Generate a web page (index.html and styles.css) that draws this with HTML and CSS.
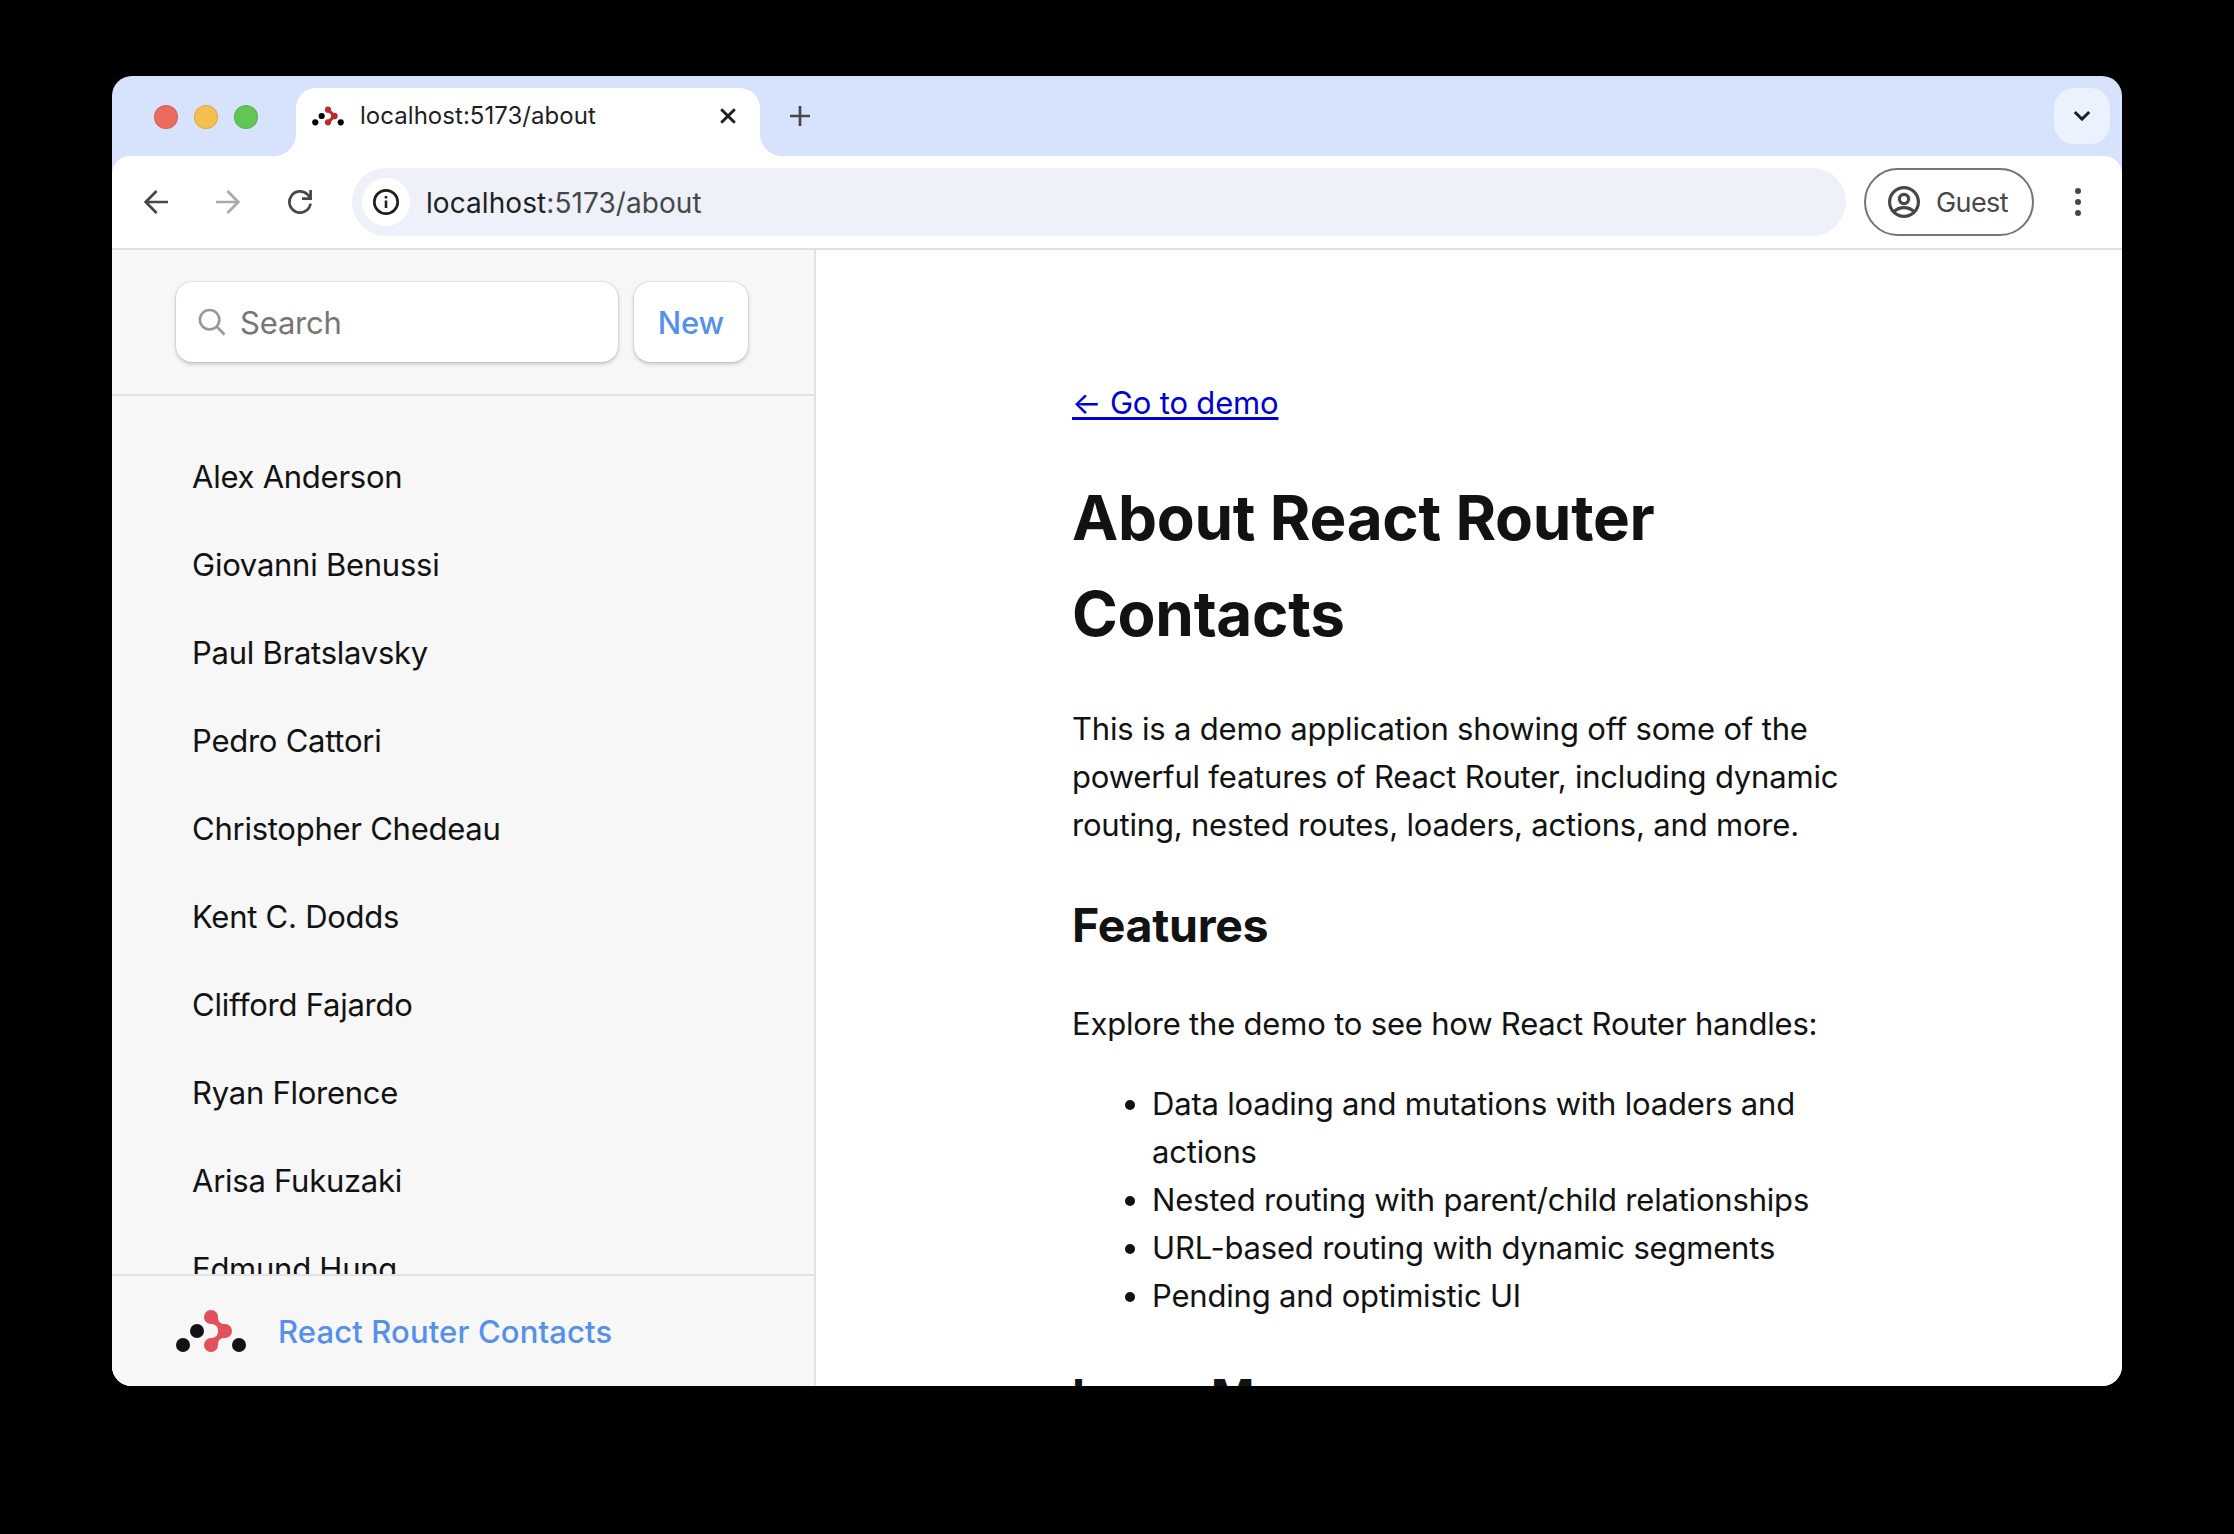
FILE: index.html
```html
<!DOCTYPE html>
<html lang="en">
<head>
<meta charset="utf-8">
<title>React Router Contacts</title>
<link rel="stylesheet" href="styles.css">
</head>
<body>
<div class="window">
  <header class="tabstrip">
    <div class="lights">
      <span class="light light-close"></span>
      <span class="light light-min"></span>
      <span class="light light-max"></span>
    </div>
    <div class="tab">
      <svg class="favicon" width="34" height="20" viewBox="0 0 72 44">
        <g fill="#000"><circle cx="8" cy="36" r="6.8"/><circle cx="22" cy="22" r="6.8"/><circle cx="64" cy="36" r="6.8"/></g>
        <path d="M36 8 50 22 36 36" fill="none" stroke="#bd2b2f" stroke-width="7"/>
        <g fill="#bd2b2f"><circle cx="36" cy="8" r="6.8"/><circle cx="50" cy="22" r="7.4"/><circle cx="36" cy="36" r="6.8"/></g>
      </svg>
      <span class="tab-title">localhost:5173/about</span>
      <svg class="tab-close" width="16" height="16" viewBox="0 0 16 16"><path d="M1.2 1.2 14.8 14.8M14.8 1.2 1.2 14.8" fill="none" stroke="#1f1f1f" stroke-width="2.9"/></svg>
    </div>
    <svg class="new-tab" width="20" height="20" viewBox="0 0 20 20"><path d="M10 0V20M0 10H20" fill="none" stroke="#474747" stroke-width="2.7"/></svg>
    <div class="tab-search">
      <svg width="18" height="12" viewBox="0 0 18 12"><path d="M1.8 2 9 9.1 16.2 2" fill="none" stroke="#1d1f24" stroke-width="2.9"/></svg>
    </div>
  </header>

  <div class="toolbar">
    <div class="nav-buttons">
      <svg width="24" height="24" viewBox="0 0 24 24"><path d="M24 12H2M12.6 1 1.7 12 12.6 23" fill="none" stroke="#474747" stroke-width="2.7"/></svg>
      <svg width="24" height="24" viewBox="0 0 24 24"><path d="M0 12H22M11.4 1 22.3 12 11.4 23" fill="none" stroke="#aaa" stroke-width="2.7"/></svg>
      <svg width="24" height="24" viewBox="0 0 24 24"><path d="M22.5 13.6A10.6 10.6 0 1 1 19.6 4.6L22 7.2M22.6 0V8.6H14" fill="none" stroke="#474747" stroke-width="2.7"/></svg>
    </div>
    <div class="omnibox">
      <span class="site-info">
        <svg width="28" height="28" viewBox="0 0 28 28"><circle cx="14" cy="14" r="11.7" fill="none" stroke="#1f1f1f" stroke-width="2.7"/><path d="M14 12.6V20M14 8V10.6" stroke="#1f1f1f" stroke-width="2.6"/></svg>
      </span>
      <span class="url">localhost<span class="url-rest">:5173/about</span></span>
    </div>
    <div class="guest">
      <svg width="32" height="32" viewBox="0 0 32 32"><g fill="none" stroke="#474747" stroke-width="3.2"><circle cx="16" cy="16" r="14.4"/><circle cx="16" cy="13" r="4.6"/><path d="M6 25.6C9 22.6 12.300 21.600 16 21.600S23 22.600 26 25.600"/></g></svg>
      <span class="guest-label">Guest</span>
    </div>
    <svg class="menu" width="6" height="28" viewBox="0 0 6 28"><g fill="#474747"><circle cx="3" cy="3" r="3"/><circle cx="3" cy="14" r="3"/><circle cx="3" cy="25" r="3"/></g></svg>
  </div>

  <div class="page">
    <aside class="sidebar">
      <div class="search-bar">
        <div class="search">
          <svg width="28" height="28" viewBox="0 0 28 28"><g fill="none" stroke="#999" stroke-width="2.600"><circle cx="11.600" cy="11.700" r="9.700"/><path d="M18.500 18.500 26.500 26.500"/></g></svg>
          <span class="placeholder">Search</span>
        </div>
        <div class="new">New</div>
      </div>
      <nav class="contacts">
        <ul>
          <li>Alex Anderson</li>
          <li>Giovanni Benussi</li>
          <li>Paul Bratslavsky</li>
          <li>Pedro Cattori</li>
          <li>Christopher Chedeau</li>
          <li>Kent C. Dodds</li>
          <li>Clifford Fajardo</li>
          <li>Ryan Florence</li>
          <li>Arisa Fukuzaki</li>
          <li>Edmund Hung</li>
        </ul>
      </nav>
      <div class="brand">
        <svg width="70" height="42" viewBox="0 0 70 42">
          <g fill="#121212"><circle cx="7" cy="35" r="7"/><circle cx="21" cy="21" r="7"/><circle cx="63" cy="35" r="7"/></g>
          <path d="M35 0C39 0 42 3 42 7C42 12.500 45 14 49 14A7 7 0 0 1 49 28C45 28 42 29.500 42 35A7 7 0 1 1 35 28C39 28 42 26 42 21S39 14 35 14A7 7 0 0 1 35 0Z" fill="#e2505a"/>
        </svg>
        <span class="brand-name">React Router Contacts</span>
      </div>
    </aside>
    <main class="about">
      <a class="back" href="#">← Go to demo</a>
      <h1>About React Router Contacts</h1>
      <p class="intro">This is a demo application showing off some of the powerful features of React Router, including dynamic routing, nested routes, loaders, actions, and more.</p>
      <h2>Features</h2>
      <p>Explore the demo to see how React Router handles:</p>
      <ul class="features">
        <li>Data loading and mutations with loaders and actions</li>
        <li>Nested routing with parent/child relationships</li>
        <li>URL-based routing with dynamic segments</li>
        <li>Pending and optimistic UI</li>
      </ul>
      <h2>Learn More</h2>
    </main>
  </div>
</div>
</body>
</html>
```
FILE: styles.css
```css
* { box-sizing: border-box; }

body {
  margin: 0;
  height: 1534px;
  padding: 76px 112px 148px;
  overflow: hidden;
  background: #000;
  color: #121212;
  font: 31px/48px Inter, "Liberation Sans", sans-serif;
  letter-spacing: -0.19px;
}

svg { display: block; flex: none; }
ul { margin: 0; padding: 0; list-style: none; }

.window {
  display: flex;
  flex-direction: column;
  height: 1310px;
  border-radius: 20px;
  overflow: hidden;
  background: #d7e2fc;
}

/* Tab strip */
.tabstrip {
  display: flex;
  align-items: flex-start;
  flex: none;
  height: 80px;
  padding: 12px 12px 0 42px;
}
.lights { display: flex; gap: 16px; padding-top: 17px; }
.light { width: 24px; height: 24px; border-radius: 50%; border: 1px solid #0000001a; }
.light-close { background: #ed6a5e; }
.light-min { background: #f5bf4f; }
.light-max { background: #61c654; }

.tab {
  position: relative;
  display: flex;
  align-items: center;
  width: 464px;
  height: 68px;
  margin-left: 38px;
  padding: 0 24px 12px 15px;
  border-radius: 20px 20px 0 0;
  background: #fff;
}
.tab::before, .tab::after {
  content: "";
  position: absolute;
  bottom: 0;
  width: 22px;
  height: 22px;
}
.tab::before { right: 100%; background: radial-gradient(circle at 0 0, #fff0 21.5px, #fff 22.5px); }
.tab::after { left: 100%; background: radial-gradient(circle at 100% 0, #fff0 21.5px, #fff 22.5px); }
.tab-title { margin-left: 15px; font-size: 24px; line-height: 36px; letter-spacing: 0.04px; color: #1f1f1f; }
.tab-close { margin-left: auto; }
.new-tab { margin: 18px 0 0 30px; }
.tab-search {
  display: flex;
  align-items: center;
  justify-content: center;
  width: 56px;
  height: 56px;
  margin-left: auto;
  border-radius: 20px;
  background: #ebf2fd;
}

/* Toolbar */
.toolbar {
  display: flex;
  align-items: center;
  flex: none;
  height: 94px;
  padding: 0 41px 0 32px;
  border-bottom: 2px solid #e0e0e0;
  border-radius: 18px 18px 0 0;
  background: #fff;
}
.nav-buttons { display: flex; gap: 48px; }
.omnibox {
  display: flex;
  align-items: center;
  width: 1494px;
  height: 68px;
  margin-left: 40px;
  padding-left: 10px;
  border-radius: 34px;
  background: #eef1fa;
}
.site-info {
  display: grid;
  place-items: center;
  width: 48px;
  height: 48px;
  border-radius: 50%;
  background: #fff;
}
.url { margin-left: 16px; padding-top: 1px; font-size: 28px; letter-spacing: 0.07px; color: #1f1f1f; }
.url-rest { color: #474747; }
.guest {
  display: flex;
  align-items: center;
  width: 170px;
  height: 68px;
  margin-left: 18px;
  padding-left: 22px;
  border: 2px solid #747474;
  border-radius: 34px;
}
.guest-label { margin-left: 16px; padding-top: 2px; font-size: 27px; letter-spacing: -0.6px; color: #474747; }
.menu { margin-left: auto; }

/* Page */
.page { display: flex; flex: 1; min-height: 0; background: #fff; }
.sidebar {
  display: flex;
  flex-direction: column;
  flex: none;
  width: 704px;
  border-right: 2px solid #e2e2e2;
  background: #f7f7f7;
}
.search-bar {
  display: flex;
  gap: 16px;
  flex: none;
  height: 146px;
  padding: 32px 64px;
  border-bottom: 2px solid #e2e2e2;
}
.search, .new {
  height: 80px;
  border-radius: 16px;
  background: #fff;
  box-shadow: 0 0 2px #0003, 0 2px 4px #0003;
}
.search { display: flex; align-items: center; width: 442px; padding-left: 22px; }
.placeholder { margin-left: 14px; padding-top: 2px; color: #767676; }
.new { width: 114px; padding-top: 1px; line-height: 80px; text-align: center; font-weight: 500; color: #5490ec; }

.contacts { flex: 1; min-height: 0; padding: 32px 64px 0; overflow: hidden; letter-spacing: -0.25px; }
.contacts li { margin: 8px 0; padding: 17px 16px 15px; height: 80px; white-space: nowrap; }

.brand {
  display: flex;
  align-items: center;
  flex: none;
  gap: 32px;
  height: 112px;
  padding: 0 64px;
  border-top: 2px solid #e2e2e2;
}
.brand-name { padding-top: 2px; font-weight: 500; letter-spacing: 0.13px; color: #5490ec; }

/* About */
.about { flex: 1; padding: 129px 256px 0; overflow: hidden; }
.back { display: inline-block; height: 48px; vertical-align: top; color: #0000d2; text-decoration-thickness: 3px; text-underline-offset: 3px; }
h1 { margin: 43px 0; font-size: 62px; line-height: 96px; font-weight: 700; letter-spacing: -0.28px; }
h2 { margin: 40px 0 39px; font-size: 46.5px; line-height: 72px; font-weight: 700; letter-spacing: -0.28px; }
p { margin: 32px 0; }
.features { padding-left: 80px; list-style: disc; }
```
